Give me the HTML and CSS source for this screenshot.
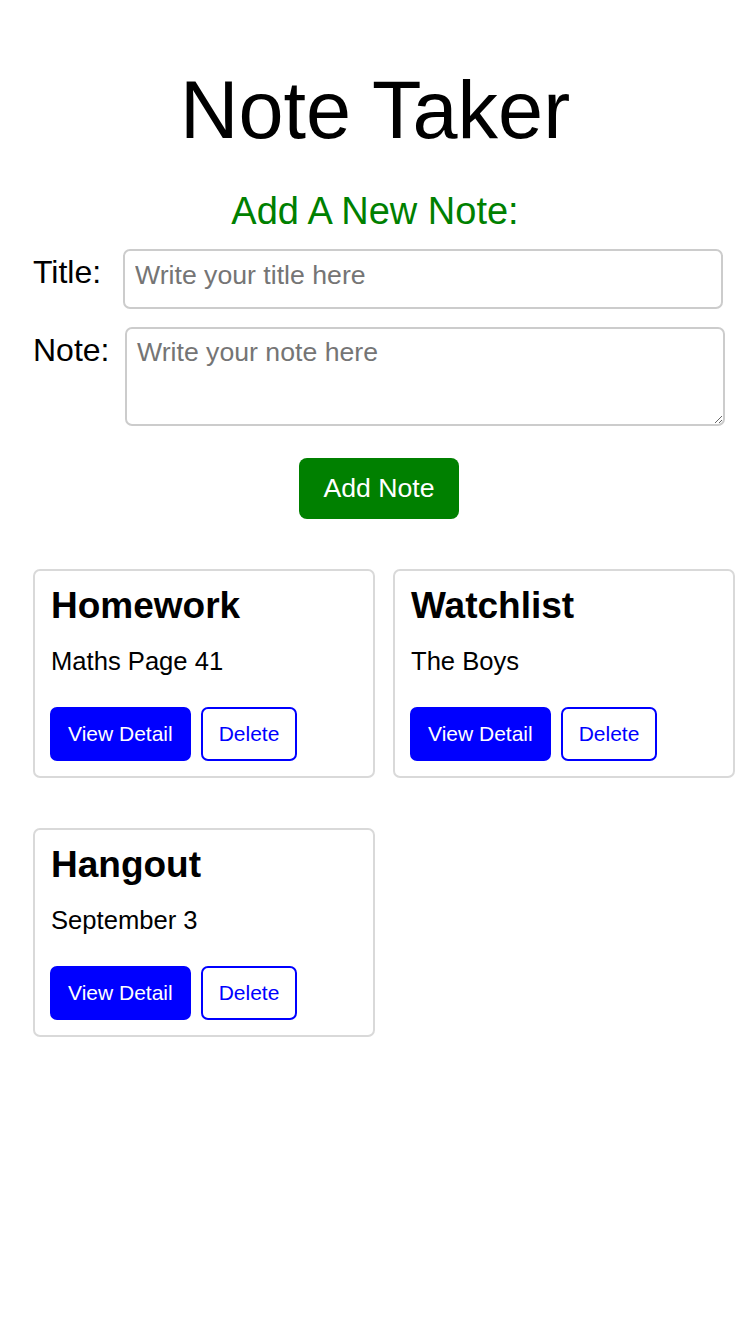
FILE: index.html
```html
<!DOCTYPE html>
<html lang="en">
<head>
<meta charset="utf-8">
<title>Note Taker</title>
<link rel="stylesheet" href="styles.css">
</head>
<body>
<main class="app">
  <h1 class="app-title">Note Taker</h1>
  <h3 class="form-heading">Add A New Note:</h3>
  <form class="note-form">
    <div class="field">
      <label class="field-label label-title" for="title">Title:</label>
      <input class="field-input title-input" id="title" type="text" placeholder="Write your title here">
    </div>
    <div class="field field-note">
      <label class="field-label label-note" for="note">Note:</label>
      <textarea class="field-input note-input" id="note" placeholder="Write your note here"></textarea>
    </div>
    <div class="form-actions">
      <button type="button" class="btn-add">Add Note</button>
    </div>
  </form>
  <section class="notes">
    <article class="note-card">
      <h2 class="note-title">Homework</h2>
      <p class="note-text">Maths Page 41</p>
      <div class="note-actions">
        <button type="button" class="btn btn-view">View Detail</button>
        <button type="button" class="btn btn-delete">Delete</button>
      </div>
    </article>
    <article class="note-card">
      <h2 class="note-title">Watchlist</h2>
      <p class="note-text">The Boys</p>
      <div class="note-actions">
        <button type="button" class="btn btn-view">View Detail</button>
        <button type="button" class="btn btn-delete">Delete</button>
      </div>
    </article>
    <article class="note-card">
      <h2 class="note-title">Hangout</h2>
      <p class="note-text">September 3</p>
      <div class="note-actions">
        <button type="button" class="btn btn-view">View Detail</button>
        <button type="button" class="btn btn-delete">Delete</button>
      </div>
    </article>
  </section>
</main>
</body>
</html>
```

FILE: styles.css
```css
* { box-sizing: border-box; }

html, body {
  margin: 0;
  padding: 0;
  background: #ffffff;
}

body {
  font-family: "Liberation Sans", Arial, sans-serif;
  color: #000000;
}

.app {
  width: 750px;
  padding-top: 64px;
}

.app-title {
  margin: 0;
  font-size: 81px;
  font-weight: 400;
  line-height: 92px;
  text-align: center;
}

.form-heading {
  margin: 34px 0 0;
  font-size: 38px;
  font-weight: 400;
  line-height: 43px;
  color: #008000;
  text-align: center;
}

.note-form {
  margin-top: 16px;
  padding-left: 33px;
}

.field {
  display: flex;
  align-items: flex-start;
}

.field-note {
  margin-top: 18px;
}

.field-label {
  margin-top: 5px;
  font-size: 32px;
  line-height: 36.8px;
}

.label-title { width: 90px; }
.label-note { width: 92px; }

.field-input {
  width: 600px;
  border: 2px solid #cccccc;
  border-radius: 7px;
  font-family: "Liberation Sans", Arial, sans-serif;
  font-size: 26.67px;
  color: #000;
  background: #fff;
  margin: 0;
  outline: none;
}

.field-input::placeholder {
  color: #757575;
}

.title-input {
  height: 60px;
  padding: 0 10px 8px;
}

.note-input {
  height: 99px;
  padding: 8px 10px;
  line-height: 30px;
  resize: both;
}

.form-actions {
  display: flex;
  justify-content: center;
  margin-top: 32px;
  padding-left: 8px;
  margin-left: -33px;
}

.btn-add {
  width: 160px;
  height: 61px;
  border: none;
  border-radius: 8px;
  background: #008000;
  color: #ffffff;
  font-family: "Liberation Sans", Arial, sans-serif;
  font-size: 26.67px;
  padding: 0;
}

.notes {
  display: flex;
  flex-wrap: wrap;
  gap: 50px 18px;
  margin-top: 50px;
  padding-left: 33px;
}

.note-card {
  width: 342px;
  height: 209px;
  border: 2px solid #d9d9d9;
  border-radius: 7px;
  padding: 14px 16px 15px;
}

.note-title {
  margin: 0;
  font-size: 37px;
  font-weight: 700;
  line-height: 42.5px;
}

.note-text {
  margin: 19px 0 0;
  font-size: 25.6px;
  line-height: 28px;
}

.note-actions {
  display: flex;
  gap: 10px;
  margin-top: 32px;
  margin-left: -1px;
}

.btn {
  height: 54px;
  padding: 0 16px;
  border: 2px solid #0000ff;
  border-radius: 7px;
  font-family: "Liberation Sans", Arial, sans-serif;
  font-size: 21px;
}

.btn-view {
  background: #0000ff;
  color: #ffffff;
}

.btn-delete {
  background: #ffffff;
  color: #0000ff;
}
```
